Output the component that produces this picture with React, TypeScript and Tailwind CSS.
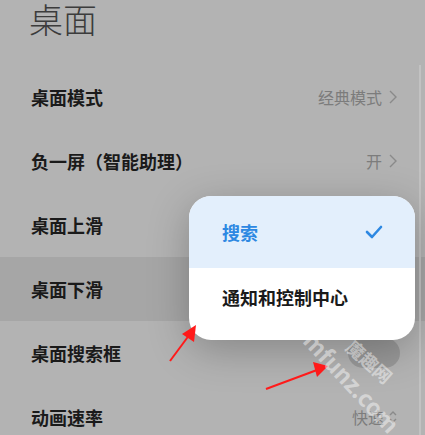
export default function App() {
  const rows = [
    { label: "桌面模式", value: "经典模式", kind: "chevron" },
    { label: "负一屏（智能助理）", value: "开", kind: "chevron" },
    { label: "桌面上滑", value: "", kind: "none" },
    { label: "桌面下滑", value: "", kind: "none", active: true },
    { label: "桌面搜索框", value: "", kind: "toggle" },
    { label: "动画速率", value: "快速", kind: "updown" },
  ];

  return (
    <div
      className="relative w-[425px] h-[435px] overflow-hidden bg-[#b3b3b3]"
      style={{ fontFamily: '"Noto Sans CJK SC", "Noto Sans", sans-serif' }}
    >
      {/* title */}
      <div className="h-[65px] pl-[29px] text-[34px] leading-[38px] font-light text-[#3c3c3c]">桌面</div>

      {/* settings list */}
      <div className="flex flex-col">
        {rows.map((row, i) => (
          <div
            key={i}
            className={`flex items-center justify-between h-[64px] pl-[31px] pr-[27px] ${
              row.active ? "bg-[#a6a6a6]" : ""
            }`}
          >
            <span className="text-[18px] font-semibold text-[#1a1a1a]">{row.label}</span>
            {row.kind === "chevron" && (
              <span className="flex items-center gap-[6px] text-[16px] text-[#7c7c7c]">
                {row.value}
                <svg width="10" height="16" viewBox="0 0 10 16" fill="none">
                  <path d="M2 2 L8 8 L2 14" stroke="#8a8a8a" strokeWidth="1.4" />
                </svg>
              </span>
            )}
            {row.kind === "toggle" && <span className="w-[52px] h-[30px] mr-[-2px] rounded-full bg-[#999999]" />}
            {row.kind === "updown" && (
              <span className="flex items-center gap-[4px] text-[16px] text-[#7c7c7c]">
                {row.value}
                <svg width="10" height="16" viewBox="0 0 10 16" fill="none">
                  <path d="M2 6 L5 3 L8 6 M2 10 L5 13 L8 10" stroke="#8a8a8a" strokeWidth="1.4" />
                </svg>
              </span>
            )}
          </div>
        ))}
      </div>

      {/* scrollbar */}
      <div className="absolute right-[4px] top-[65px] bottom-0 w-[2px] bg-[#c2c2c2]" />

      {/* popup menu */}
      <div className="absolute left-[189px] top-[196px] w-[226px] h-[144px] rounded-[22px] overflow-hidden bg-white shadow-[0_10px_40px_rgba(0,0,0,0.25)] flex flex-col">
        <div className="h-[72px] bg-[#e3effc] flex items-center justify-between pl-[33px] pr-[32px]">
          <span className="text-[18px] font-semibold text-[#2d88e2]">搜索</span>
          <svg width="18" height="14" viewBox="0 0 18 14" fill="none">
            <path d="M2 7 L7 12 L16 2" stroke="#2d88e2" strokeWidth="2.6" strokeLinecap="round" strokeLinejoin="round" />
          </svg>
        </div>
        <div className="h-[58px] flex items-center pl-[33px]">
          <span className="text-[18px] font-semibold text-[#1a1a1a]">通知和控制中心</span>
        </div>
      </div>

      {/* annotation arrows */}
      <svg className="absolute left-0 top-0" width="425" height="435" viewBox="0 0 425 435">
        <line x1="170" y1="361" x2="190" y2="334" stroke="#ff1a1a" strokeWidth="2" />
        <polygon points="196,325 182,334 194,342" fill="#ff1a1a" />
        <line x1="266" y1="389" x2="317" y2="370" stroke="#ff1a1a" strokeWidth="2" />
        <polygon points="328,366 313,362 317,377" fill="#ff1a1a" />
      </svg>

      {/* watermark */}
      <div className="absolute left-[352px] top-[382px] -translate-x-1/2 -translate-y-1/2 rotate-[47deg] text-[23px] leading-none font-bold text-white/45 whitespace-nowrap pointer-events-none">
        mfunz.com
      </div>
      <div className="absolute left-[370px] top-[361px] -translate-x-1/2 -translate-y-1/2 rotate-[42deg] text-[18px] leading-none font-bold text-white/45 whitespace-nowrap pointer-events-none">
        魔趣网
      </div>
    </div>
  );
}
